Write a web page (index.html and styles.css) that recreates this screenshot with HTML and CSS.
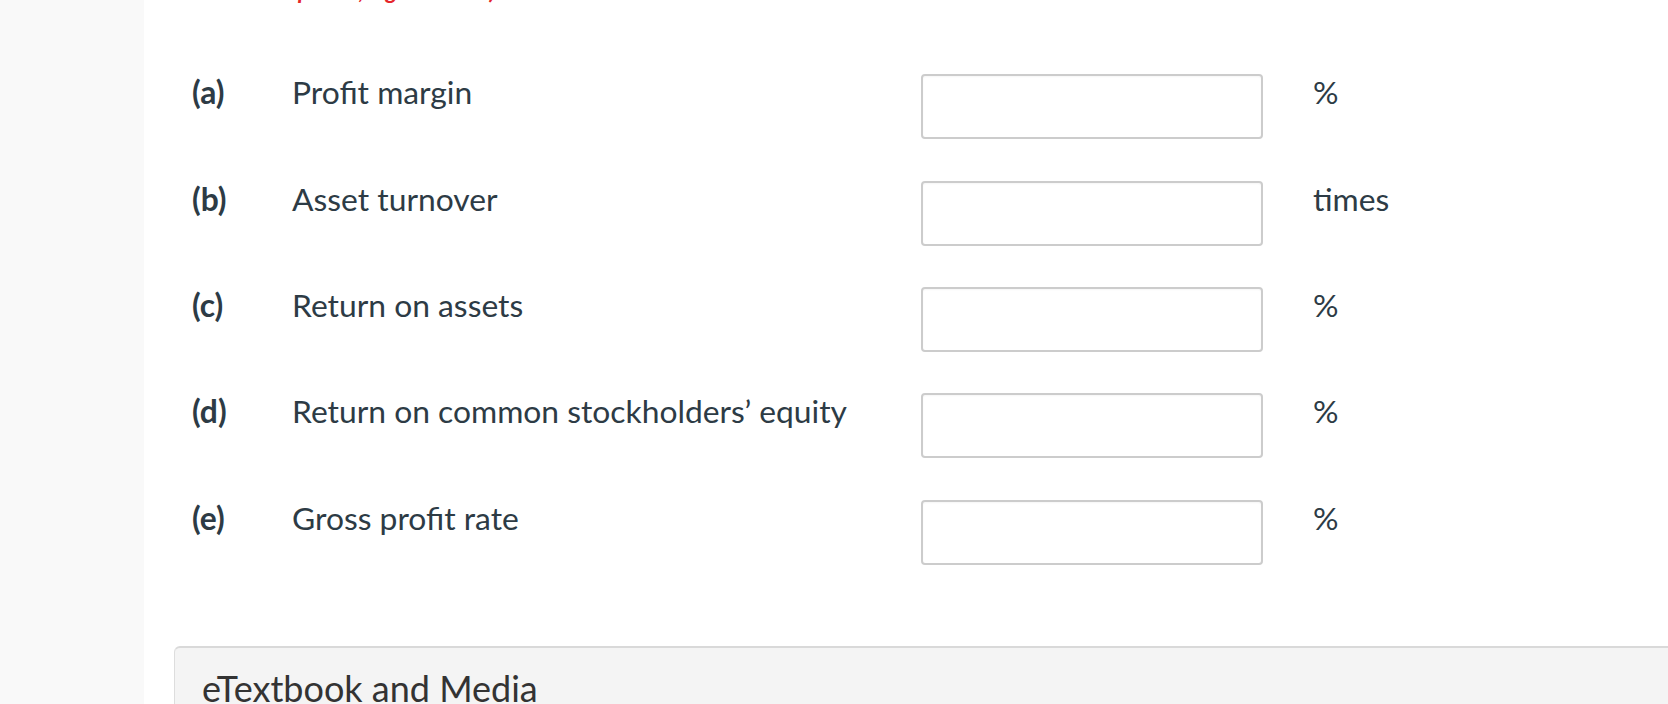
FILE: index.html
```html
<!DOCTYPE html>
<html lang="en">
<head>
<meta charset="utf-8">
<title>Ratios</title>
<link rel="stylesheet" href="styles.css">
</head>
<body>
<div class="layout">
  <aside class="sidebar"></aside>
  <main class="main">
    <p class="note">(Round answers<br>to 2 decimal places, e.g. 15.25%.)</p>
    <div class="rows">
      <div class="row">
        <span class="label">(a)</span>
        <span class="desc">Profit margin</span>
        <input class="field" type="text">
        <span class="unit">%</span>
      </div>
      <div class="row">
        <span class="label">(b)</span>
        <span class="desc">Asset turnover</span>
        <input class="field" type="text">
        <span class="unit">times</span>
      </div>
      <div class="row">
        <span class="label">(c)</span>
        <span class="desc">Return on assets</span>
        <input class="field" type="text">
        <span class="unit">%</span>
      </div>
      <div class="row">
        <span class="label">(d)</span>
        <span class="desc">Return on common stockholders’ equity</span>
        <input class="field" type="text">
        <span class="unit">%</span>
      </div>
      <div class="row">
        <span class="label">(e)</span>
        <span class="desc">Gross profit rate</span>
        <input class="field" type="text">
        <span class="unit">%</span>
      </div>
    </div>
    <section class="panel">
      <h2 class="panel-title">eTextbook and Media</h2>
    </section>
  </main>
</div>
</body>
</html>
```
FILE: styles.css
```css
html, body {
  margin: 0;
  padding: 0;
  background: #ffffff;
  height: 100%;
  overflow: hidden;
}
body {
  font-family: Lato, "Open Sans", "Liberation Sans", sans-serif;
  color: #2d3b45;
}
.layout {
  display: flex;
  min-height: 100vh;
}
.sidebar {
  width: 144px;
  flex: 0 0 144px;
  background: #f9f9f9;
}
.main {
  flex: 1;
  padding-left: 30px;
  min-width: 0;
}
.note {
  margin: -55px 0 0 0;
  font-size: 23px;
  line-height: 30px;
  font-weight: 700;
  font-style: italic;
  color: #e5262a;
}
.rows {
  margin-top: 69.3px;
  padding-left: 18px;
  display: flex;
  flex-direction: column;
  gap: 41.4px;
}
.row {
  display: flex;
  align-items: flex-start;
  height: 65px;
  font-size: 31.8px;
  line-height: 37px;
}
.label {
  width: 100px;
  flex: 0 0 100px;
  font-weight: 700;
}
.desc {
  width: 629px;
  flex: 0 0 629px;
}
.field {
  box-sizing: border-box;
  width: 342px;
  height: 65px;
  margin: 0;
  border: 2px solid #cccccc;
  border-radius: 4px;
  background: #ffffff;
  box-shadow: inset 0 1px 2px rgba(0,0,0,0.04);
  font: inherit;
  padding: 0 10px;
}
.unit {
  margin-left: 50px;
}
.panel {
  margin-top: 81px;
  background: #f4f4f4;
  border-top: 2px solid #d9d9d9;
  border-left: 1px solid #dddddd;
  border-top-left-radius: 6px;
  padding: 21px 0 40px 27px;
  min-height: 120px;
}
.panel-title {
  margin: 0;
  font-size: 36px;
  line-height: 38px;
  font-weight: 400;
  color: #333333;
}
```
